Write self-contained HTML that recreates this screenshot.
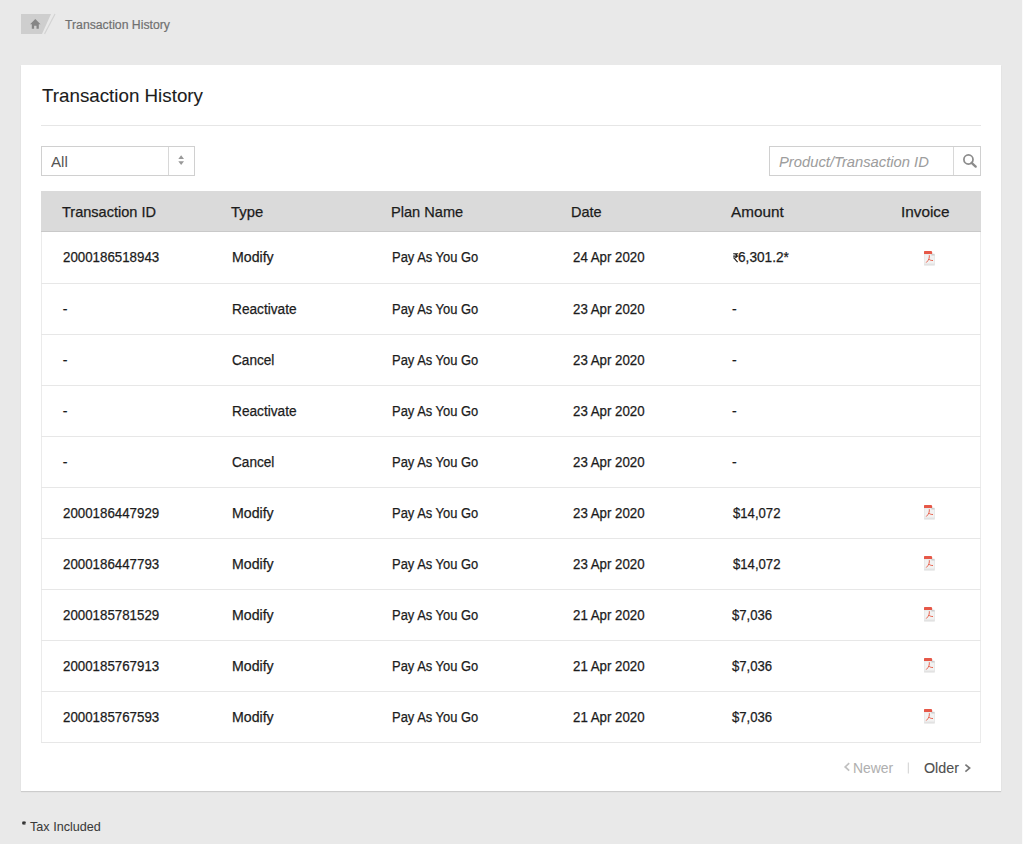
<!DOCTYPE html>
<html><head><meta charset="utf-8"><style>
html,body{margin:0;padding:0;}
body{width:1023px;height:844px;background:#e9e9e9;position:relative;overflow:hidden;font-family:'Liberation Sans', sans-serif;}
.t{position:absolute;white-space:nowrap;}
</style></head><body>
<svg style="position:absolute;left:0;top:0" width="80" height="40"><polygon points="21,14 51,14 42,34 21,34" fill="#cecece"/><line x1="55" y1="14" x2="44.5" y2="34" stroke="#d3d3d3" stroke-width="1.2"/><path d="M35.3 19 L40.5 24.2 L38.8 24.2 L38.8 28.8 L36.5 28.8 L36.5 25.8 L34.1 25.8 L34.1 28.8 L31.8 28.8 L31.8 24.2 L30.1 24.2 Z" fill="#858585"/></svg>
<div class="t" style="left:64.5px;top:18.52px;font-size:12.5px;line-height:12.5px;color:#707070;-webkit-text-stroke:0.2px #707070;transform:scaleX(0.9785);transform-origin:0 0;">Transaction History</div>
<div style="position:absolute;left:21px;top:65px;width:980px;height:726px;background:#fff;box-shadow:0 1px 1px rgba(0,0,0,0.12)"></div>
<div class="t" style="left:42.0px;top:86.42px;font-size:19px;line-height:19px;color:#1c1c1c;-webkit-text-stroke:0.1px #1c1c1c;transform:scaleX(0.9877);transform-origin:0 0;">Transaction History</div>
<div style="position:absolute;left:41px;top:125px;width:940px;height:1px;background:#e6e6e6"></div>
<div style="position:absolute;left:41px;top:146px;width:152px;height:28px;border:1px solid #d0d0d0;background:#fff"></div>
<div style="position:absolute;left:168px;top:147px;width:1px;height:28px;background:#d8d8d8"></div>
<svg style="position:absolute;left:176px;top:153px" width="10" height="14"><path d="M5.15 2.3 L8.0 5.9 L2.3 5.9 Z M5.15 12.0 L8.0 8.2 L2.3 8.2 Z" fill="#999"/></svg>
<div class="t" style="left:50.9px;top:154.93px;font-size:14.5px;line-height:14.5px;color:#555;transform:scaleX(1.0467);transform-origin:0 0;">All</div>
<div style="position:absolute;left:769px;top:146px;width:210px;height:28px;border:1px solid #d0d0d0;background:#fff"></div>
<div style="position:absolute;left:953px;top:147px;width:1px;height:28px;background:#d8d8d8"></div>
<svg style="position:absolute;left:960px;top:152px" width="20" height="20"><circle cx="8.45" cy="7.5" r="4.55" fill="none" stroke="#8c8c8c" stroke-width="1.75"/><line x1="11.6" y1="10.8" x2="15.7" y2="14.6" stroke="#8c8c8c" stroke-width="2.3" stroke-linecap="round"/></svg>
<div class="t" style="left:779.0px;top:154.10px;font-size:15px;line-height:15px;color:#9d9d9d;font-style:italic;-webkit-text-stroke:0.05px #9d9d9d;transform:scaleX(0.9842);transform-origin:0 0;">Product/Transaction ID</div>
<div style="position:absolute;left:41px;top:191px;width:940px;height:40px;background:#dadada;border-bottom:1px solid #c9c9c9"></div>
<div style="position:absolute;left:41px;top:232px;width:938px;height:510px;border-left:1px solid #ebebeb;border-right:1px solid #ebebeb"></div>
<div style="position:absolute;left:41px;top:283px;width:940px;height:1px;background:#e7e7e7"></div>
<div style="position:absolute;left:41px;top:334px;width:940px;height:1px;background:#e7e7e7"></div>
<div style="position:absolute;left:41px;top:385px;width:940px;height:1px;background:#e7e7e7"></div>
<div style="position:absolute;left:41px;top:436px;width:940px;height:1px;background:#e7e7e7"></div>
<div style="position:absolute;left:41px;top:487px;width:940px;height:1px;background:#e7e7e7"></div>
<div style="position:absolute;left:41px;top:538px;width:940px;height:1px;background:#e7e7e7"></div>
<div style="position:absolute;left:41px;top:589px;width:940px;height:1px;background:#e7e7e7"></div>
<div style="position:absolute;left:41px;top:640px;width:940px;height:1px;background:#e7e7e7"></div>
<div style="position:absolute;left:41px;top:691px;width:940px;height:1px;background:#e7e7e7"></div>
<div style="position:absolute;left:41px;top:742px;width:940px;height:1px;background:#e7e7e7"></div>
<div class="t" style="left:62.0px;top:203.60px;font-size:15px;line-height:15px;color:#1c1c1c;-webkit-text-stroke:0.25px #1c1c1c;transform:scaleX(0.9691);transform-origin:0 0;">Transaction ID</div>
<div class="t" style="left:231.4px;top:203.60px;font-size:15px;line-height:15px;color:#1c1c1c;-webkit-text-stroke:0.25px #1c1c1c;transform:scaleX(0.9906);transform-origin:0 0;">Type</div>
<div class="t" style="left:391.03px;top:203.60px;font-size:15px;line-height:15px;color:#1c1c1c;-webkit-text-stroke:0.25px #1c1c1c;transform:scaleX(0.9726);transform-origin:0 0;">Plan Name</div>
<div class="t" style="left:571.03px;top:203.60px;font-size:15px;line-height:15px;color:#1c1c1c;-webkit-text-stroke:0.25px #1c1c1c;transform:scaleX(0.9667);transform-origin:0 0;">Date</div>
<div class="t" style="left:731.0px;top:203.60px;font-size:15px;line-height:15px;color:#1c1c1c;-webkit-text-stroke:0.25px #1c1c1c;transform:scaleX(1.0192);transform-origin:0 0;">Amount</div>
<div class="t" style="left:900.98px;top:203.60px;font-size:15px;line-height:15px;color:#1c1c1c;-webkit-text-stroke:0.25px #1c1c1c;transform:scaleX(1.0217);transform-origin:0 0;">Invoice</div>
<div class="t" style="left:62.7px;top:250.35px;font-size:14px;line-height:14px;color:#1c1c1c;-webkit-text-stroke:0.25px #1c1c1c;transform:scaleX(0.9505);transform-origin:0 0;">2000186518943</div>
<div class="t" style="left:231.79px;top:250.35px;font-size:14px;line-height:14px;color:#1c1c1c;-webkit-text-stroke:0.25px #1c1c1c;transform:scaleX(1.0098);transform-origin:0 0;">Modify</div>
<div class="t" style="left:392.08px;top:250.35px;font-size:14px;line-height:14px;color:#1c1c1c;-webkit-text-stroke:0.25px #1c1c1c;transform:scaleX(0.9239);transform-origin:0 0;">Pay As You Go</div>
<div class="t" style="left:572.5px;top:250.35px;font-size:14px;line-height:14px;color:#1c1c1c;-webkit-text-stroke:0.25px #1c1c1c;transform:scaleX(0.948);transform-origin:0 0;">24 Apr 2020</div>
<div class="t" style="left:738.02px;top:250.35px;font-size:14px;line-height:14px;color:#1c1c1c;-webkit-text-stroke:0.25px #1c1c1c;transform:scaleX(0.9765);transform-origin:0 0;">6,301.2*</div>
<svg style="position:absolute;left:733.2px;top:252.6px" width="7" height="10"><path d="M0.2 0.7 H5.2 M0.2 3.1 H5.2 M1.0 0.7 C4.6 0.7 4.8 5.0 1.0 5.0 L4.6 9.2" fill="none" stroke="#1c1c1c" stroke-width="1.15"/></svg>
<svg style="position:absolute;left:924px;top:251px" width="12" height="16" viewBox="0 0 12 16"><path d="M0.3 3 H10.5 V14.2 H0.3 Z" fill="#f2f2f2" stroke="#dedede" stroke-width="0.6"/><rect x="0.3" y="12.6" width="10.2" height="1.6" fill="#e2e2e2"/><path d="M7.4 2.4 L10.6 3.4 L10.6 4.4 L7.4 4.4 Z" fill="#cbcbcb"/><path d="M0 0.6 Q0 0 0.6 0 H7 Q8.1 0 8.1 1.3 V3 H0 Z" fill="#e65848"/><path d="M5.3 4.2 C5.6 6.4 5.0 9 2.2 11.6 M5.0 8.1 C6.0 9.2 7.3 9.6 9.0 9.5" fill="none" stroke="#e86450" stroke-width="1"/></svg>
<div class="t" style="left:62.7px;top:302.35px;font-size:14px;line-height:14px;color:#1c1c1c;-webkit-text-stroke:0.25px #1c1c1c;">-</div>
<div class="t" style="left:231.82px;top:302.35px;font-size:14px;line-height:14px;color:#1c1c1c;-webkit-text-stroke:0.25px #1c1c1c;transform:scaleX(0.9769);transform-origin:0 0;">Reactivate</div>
<div class="t" style="left:392.08px;top:302.35px;font-size:14px;line-height:14px;color:#1c1c1c;-webkit-text-stroke:0.25px #1c1c1c;transform:scaleX(0.9239);transform-origin:0 0;">Pay As You Go</div>
<div class="t" style="left:572.5px;top:302.35px;font-size:14px;line-height:14px;color:#1c1c1c;-webkit-text-stroke:0.25px #1c1c1c;transform:scaleX(0.948);transform-origin:0 0;">23 Apr 2020</div>
<div class="t" style="left:732.1px;top:302.35px;font-size:14px;line-height:14px;color:#1c1c1c;-webkit-text-stroke:0.25px #1c1c1c;">-</div>
<div class="t" style="left:62.7px;top:353.35px;font-size:14px;line-height:14px;color:#1c1c1c;-webkit-text-stroke:0.25px #1c1c1c;">-</div>
<div class="t" style="left:231.83px;top:353.35px;font-size:14px;line-height:14px;color:#1c1c1c;-webkit-text-stroke:0.25px #1c1c1c;transform:scaleX(0.9714);transform-origin:0 0;">Cancel</div>
<div class="t" style="left:392.08px;top:353.35px;font-size:14px;line-height:14px;color:#1c1c1c;-webkit-text-stroke:0.25px #1c1c1c;transform:scaleX(0.9239);transform-origin:0 0;">Pay As You Go</div>
<div class="t" style="left:572.5px;top:353.35px;font-size:14px;line-height:14px;color:#1c1c1c;-webkit-text-stroke:0.25px #1c1c1c;transform:scaleX(0.948);transform-origin:0 0;">23 Apr 2020</div>
<div class="t" style="left:732.1px;top:353.35px;font-size:14px;line-height:14px;color:#1c1c1c;-webkit-text-stroke:0.25px #1c1c1c;">-</div>
<div class="t" style="left:62.7px;top:404.35px;font-size:14px;line-height:14px;color:#1c1c1c;-webkit-text-stroke:0.25px #1c1c1c;">-</div>
<div class="t" style="left:231.82px;top:404.35px;font-size:14px;line-height:14px;color:#1c1c1c;-webkit-text-stroke:0.25px #1c1c1c;transform:scaleX(0.9769);transform-origin:0 0;">Reactivate</div>
<div class="t" style="left:392.08px;top:404.35px;font-size:14px;line-height:14px;color:#1c1c1c;-webkit-text-stroke:0.25px #1c1c1c;transform:scaleX(0.9239);transform-origin:0 0;">Pay As You Go</div>
<div class="t" style="left:572.5px;top:404.35px;font-size:14px;line-height:14px;color:#1c1c1c;-webkit-text-stroke:0.25px #1c1c1c;transform:scaleX(0.948);transform-origin:0 0;">23 Apr 2020</div>
<div class="t" style="left:732.1px;top:404.35px;font-size:14px;line-height:14px;color:#1c1c1c;-webkit-text-stroke:0.25px #1c1c1c;">-</div>
<div class="t" style="left:62.7px;top:455.35px;font-size:14px;line-height:14px;color:#1c1c1c;-webkit-text-stroke:0.25px #1c1c1c;">-</div>
<div class="t" style="left:231.83px;top:455.35px;font-size:14px;line-height:14px;color:#1c1c1c;-webkit-text-stroke:0.25px #1c1c1c;transform:scaleX(0.9714);transform-origin:0 0;">Cancel</div>
<div class="t" style="left:392.08px;top:455.35px;font-size:14px;line-height:14px;color:#1c1c1c;-webkit-text-stroke:0.25px #1c1c1c;transform:scaleX(0.9239);transform-origin:0 0;">Pay As You Go</div>
<div class="t" style="left:572.5px;top:455.35px;font-size:14px;line-height:14px;color:#1c1c1c;-webkit-text-stroke:0.25px #1c1c1c;transform:scaleX(0.948);transform-origin:0 0;">23 Apr 2020</div>
<div class="t" style="left:732.1px;top:455.35px;font-size:14px;line-height:14px;color:#1c1c1c;-webkit-text-stroke:0.25px #1c1c1c;">-</div>
<div class="t" style="left:62.7px;top:506.35px;font-size:14px;line-height:14px;color:#1c1c1c;-webkit-text-stroke:0.25px #1c1c1c;transform:scaleX(0.9505);transform-origin:0 0;">2000186447929</div>
<div class="t" style="left:231.79px;top:506.35px;font-size:14px;line-height:14px;color:#1c1c1c;-webkit-text-stroke:0.25px #1c1c1c;transform:scaleX(1.0098);transform-origin:0 0;">Modify</div>
<div class="t" style="left:392.08px;top:506.35px;font-size:14px;line-height:14px;color:#1c1c1c;-webkit-text-stroke:0.25px #1c1c1c;transform:scaleX(0.9239);transform-origin:0 0;">Pay As You Go</div>
<div class="t" style="left:572.5px;top:506.35px;font-size:14px;line-height:14px;color:#1c1c1c;-webkit-text-stroke:0.25px #1c1c1c;transform:scaleX(0.948);transform-origin:0 0;">23 Apr 2020</div>
<div class="t" style="left:732.8px;top:506.35px;font-size:14px;line-height:14px;color:#1c1c1c;-webkit-text-stroke:0.25px #1c1c1c;transform:scaleX(0.938);transform-origin:0 0;">$14,072</div>
<svg style="position:absolute;left:924px;top:505px" width="12" height="16" viewBox="0 0 12 16"><path d="M0.3 3 H10.5 V14.2 H0.3 Z" fill="#f2f2f2" stroke="#dedede" stroke-width="0.6"/><rect x="0.3" y="12.6" width="10.2" height="1.6" fill="#e2e2e2"/><path d="M7.4 2.4 L10.6 3.4 L10.6 4.4 L7.4 4.4 Z" fill="#cbcbcb"/><path d="M0 0.6 Q0 0 0.6 0 H7 Q8.1 0 8.1 1.3 V3 H0 Z" fill="#e65848"/><path d="M5.3 4.2 C5.6 6.4 5.0 9 2.2 11.6 M5.0 8.1 C6.0 9.2 7.3 9.6 9.0 9.5" fill="none" stroke="#e86450" stroke-width="1"/></svg>
<div class="t" style="left:62.7px;top:557.35px;font-size:14px;line-height:14px;color:#1c1c1c;-webkit-text-stroke:0.25px #1c1c1c;transform:scaleX(0.9505);transform-origin:0 0;">2000186447793</div>
<div class="t" style="left:231.79px;top:557.35px;font-size:14px;line-height:14px;color:#1c1c1c;-webkit-text-stroke:0.25px #1c1c1c;transform:scaleX(1.0098);transform-origin:0 0;">Modify</div>
<div class="t" style="left:392.08px;top:557.35px;font-size:14px;line-height:14px;color:#1c1c1c;-webkit-text-stroke:0.25px #1c1c1c;transform:scaleX(0.9239);transform-origin:0 0;">Pay As You Go</div>
<div class="t" style="left:572.5px;top:557.35px;font-size:14px;line-height:14px;color:#1c1c1c;-webkit-text-stroke:0.25px #1c1c1c;transform:scaleX(0.948);transform-origin:0 0;">23 Apr 2020</div>
<div class="t" style="left:732.8px;top:557.35px;font-size:14px;line-height:14px;color:#1c1c1c;-webkit-text-stroke:0.25px #1c1c1c;transform:scaleX(0.938);transform-origin:0 0;">$14,072</div>
<svg style="position:absolute;left:924px;top:556px" width="12" height="16" viewBox="0 0 12 16"><path d="M0.3 3 H10.5 V14.2 H0.3 Z" fill="#f2f2f2" stroke="#dedede" stroke-width="0.6"/><rect x="0.3" y="12.6" width="10.2" height="1.6" fill="#e2e2e2"/><path d="M7.4 2.4 L10.6 3.4 L10.6 4.4 L7.4 4.4 Z" fill="#cbcbcb"/><path d="M0 0.6 Q0 0 0.6 0 H7 Q8.1 0 8.1 1.3 V3 H0 Z" fill="#e65848"/><path d="M5.3 4.2 C5.6 6.4 5.0 9 2.2 11.6 M5.0 8.1 C6.0 9.2 7.3 9.6 9.0 9.5" fill="none" stroke="#e86450" stroke-width="1"/></svg>
<div class="t" style="left:62.7px;top:608.35px;font-size:14px;line-height:14px;color:#1c1c1c;-webkit-text-stroke:0.25px #1c1c1c;transform:scaleX(0.9505);transform-origin:0 0;">2000185781529</div>
<div class="t" style="left:231.79px;top:608.35px;font-size:14px;line-height:14px;color:#1c1c1c;-webkit-text-stroke:0.25px #1c1c1c;transform:scaleX(1.0098);transform-origin:0 0;">Modify</div>
<div class="t" style="left:392.08px;top:608.35px;font-size:14px;line-height:14px;color:#1c1c1c;-webkit-text-stroke:0.25px #1c1c1c;transform:scaleX(0.9239);transform-origin:0 0;">Pay As You Go</div>
<div class="t" style="left:572.5px;top:608.35px;font-size:14px;line-height:14px;color:#1c1c1c;-webkit-text-stroke:0.25px #1c1c1c;transform:scaleX(0.948);transform-origin:0 0;">21 Apr 2020</div>
<div class="t" style="left:732.3px;top:608.35px;font-size:14px;line-height:14px;color:#1c1c1c;-webkit-text-stroke:0.25px #1c1c1c;transform:scaleX(0.9372);transform-origin:0 0;">$7,036</div>
<svg style="position:absolute;left:924px;top:607px" width="12" height="16" viewBox="0 0 12 16"><path d="M0.3 3 H10.5 V14.2 H0.3 Z" fill="#f2f2f2" stroke="#dedede" stroke-width="0.6"/><rect x="0.3" y="12.6" width="10.2" height="1.6" fill="#e2e2e2"/><path d="M7.4 2.4 L10.6 3.4 L10.6 4.4 L7.4 4.4 Z" fill="#cbcbcb"/><path d="M0 0.6 Q0 0 0.6 0 H7 Q8.1 0 8.1 1.3 V3 H0 Z" fill="#e65848"/><path d="M5.3 4.2 C5.6 6.4 5.0 9 2.2 11.6 M5.0 8.1 C6.0 9.2 7.3 9.6 9.0 9.5" fill="none" stroke="#e86450" stroke-width="1"/></svg>
<div class="t" style="left:62.7px;top:659.35px;font-size:14px;line-height:14px;color:#1c1c1c;-webkit-text-stroke:0.25px #1c1c1c;transform:scaleX(0.9505);transform-origin:0 0;">2000185767913</div>
<div class="t" style="left:231.79px;top:659.35px;font-size:14px;line-height:14px;color:#1c1c1c;-webkit-text-stroke:0.25px #1c1c1c;transform:scaleX(1.0098);transform-origin:0 0;">Modify</div>
<div class="t" style="left:392.08px;top:659.35px;font-size:14px;line-height:14px;color:#1c1c1c;-webkit-text-stroke:0.25px #1c1c1c;transform:scaleX(0.9239);transform-origin:0 0;">Pay As You Go</div>
<div class="t" style="left:572.5px;top:659.35px;font-size:14px;line-height:14px;color:#1c1c1c;-webkit-text-stroke:0.25px #1c1c1c;transform:scaleX(0.948);transform-origin:0 0;">21 Apr 2020</div>
<div class="t" style="left:732.3px;top:659.35px;font-size:14px;line-height:14px;color:#1c1c1c;-webkit-text-stroke:0.25px #1c1c1c;transform:scaleX(0.9372);transform-origin:0 0;">$7,036</div>
<svg style="position:absolute;left:924px;top:658px" width="12" height="16" viewBox="0 0 12 16"><path d="M0.3 3 H10.5 V14.2 H0.3 Z" fill="#f2f2f2" stroke="#dedede" stroke-width="0.6"/><rect x="0.3" y="12.6" width="10.2" height="1.6" fill="#e2e2e2"/><path d="M7.4 2.4 L10.6 3.4 L10.6 4.4 L7.4 4.4 Z" fill="#cbcbcb"/><path d="M0 0.6 Q0 0 0.6 0 H7 Q8.1 0 8.1 1.3 V3 H0 Z" fill="#e65848"/><path d="M5.3 4.2 C5.6 6.4 5.0 9 2.2 11.6 M5.0 8.1 C6.0 9.2 7.3 9.6 9.0 9.5" fill="none" stroke="#e86450" stroke-width="1"/></svg>
<div class="t" style="left:62.7px;top:710.35px;font-size:14px;line-height:14px;color:#1c1c1c;-webkit-text-stroke:0.25px #1c1c1c;transform:scaleX(0.9505);transform-origin:0 0;">2000185767593</div>
<div class="t" style="left:231.79px;top:710.35px;font-size:14px;line-height:14px;color:#1c1c1c;-webkit-text-stroke:0.25px #1c1c1c;transform:scaleX(1.0098);transform-origin:0 0;">Modify</div>
<div class="t" style="left:392.08px;top:710.35px;font-size:14px;line-height:14px;color:#1c1c1c;-webkit-text-stroke:0.25px #1c1c1c;transform:scaleX(0.9239);transform-origin:0 0;">Pay As You Go</div>
<div class="t" style="left:572.5px;top:710.35px;font-size:14px;line-height:14px;color:#1c1c1c;-webkit-text-stroke:0.25px #1c1c1c;transform:scaleX(0.948);transform-origin:0 0;">21 Apr 2020</div>
<div class="t" style="left:732.3px;top:710.35px;font-size:14px;line-height:14px;color:#1c1c1c;-webkit-text-stroke:0.25px #1c1c1c;transform:scaleX(0.9372);transform-origin:0 0;">$7,036</div>
<svg style="position:absolute;left:924px;top:709px" width="12" height="16" viewBox="0 0 12 16"><path d="M0.3 3 H10.5 V14.2 H0.3 Z" fill="#f2f2f2" stroke="#dedede" stroke-width="0.6"/><rect x="0.3" y="12.6" width="10.2" height="1.6" fill="#e2e2e2"/><path d="M7.4 2.4 L10.6 3.4 L10.6 4.4 L7.4 4.4 Z" fill="#cbcbcb"/><path d="M0 0.6 Q0 0 0.6 0 H7 Q8.1 0 8.1 1.3 V3 H0 Z" fill="#e65848"/><path d="M5.3 4.2 C5.6 6.4 5.0 9 2.2 11.6 M5.0 8.1 C6.0 9.2 7.3 9.6 9.0 9.5" fill="none" stroke="#e86450" stroke-width="1"/></svg>
<svg style="position:absolute;left:840px;top:758px" width="140" height="20"><path d="M9.2 5.2 L5.2 8.9 L9.2 12.6" fill="none" stroke="#c0c0c0" stroke-width="1.7"/><line x1="68.3" y1="4.5" x2="68.3" y2="15.5" stroke="#d0d0d0" stroke-width="1"/><path d="M125.4 6.6 L129.6 10.1 L125.4 13.6" fill="none" stroke="#777" stroke-width="1.7"/></svg>
<div class="t" style="left:853.39px;top:761.92px;font-size:13.8px;line-height:13.8px;color:#b0b0b0;-webkit-text-stroke:0.05px #b0b0b0;transform:scaleX(1.0077);transform-origin:0 0;">Newer</div>
<div class="t" style="left:923.66px;top:761.92px;font-size:13.8px;line-height:13.8px;color:#505050;-webkit-text-stroke:0.1px #505050;transform:scaleX(1.0364);transform-origin:0 0;">Older</div>
<div style="position:absolute;left:1022px;top:0;width:1px;height:844px;background:#fbfbfb"></div>
<svg style="position:absolute;left:21px;top:820px" width="6" height="6"><path d="M3 1 V5 M1.2 2 L4.8 4 M1.2 4 L4.8 2" stroke="#333" stroke-width="1.1"/></svg>
<div class="t" style="left:30.2px;top:819.73px;font-size:13.2px;line-height:13.2px;color:#3a3a3a;-webkit-text-stroke:0.05px #3a3a3a;transform:scaleX(0.9562);transform-origin:0 0;">Tax Included</div>
</body></html>
